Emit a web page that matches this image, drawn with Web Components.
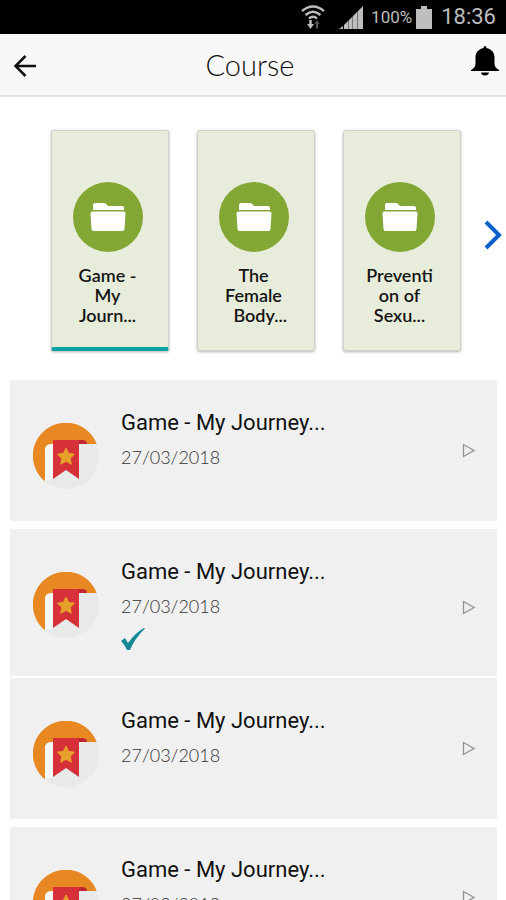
<!DOCTYPE html>
<html lang="en">
<head>
<meta charset="utf-8">
<meta name="viewport" content="width=device-width, initial-scale=1">
<title>Course</title>
<style>
  html, body { height: 100%; margin: 0; }
  body { background: #fff; color: #111; font-family: Lato, "Open Sans", sans-serif; overflow: hidden; }
</style>
</head>
<body>
<course-app></course-app>
<script>
const define = (name, html, setup) => {
  const template = document.createElement('template');
  template.innerHTML = html;
  customElements.define(name, class extends HTMLElement {
    connectedCallback() {
      if (this.shadowRoot) return;
      const root = this.attachShadow({ mode: 'open' });
      root.append(template.content.cloneNode(true));
      if (setup) setup(this, root);
    }
  });
};

define('status-bar', `
<style>
  :host { display: flex; align-items: center; justify-content: flex-end; height: 34px; padding-right: 10px; box-sizing: border-box; background: #000; color: #bdbdbd; font-family: Roboto, sans-serif; }
  svg { display: block; flex: none; }
  .wifi { margin-right: 13px; }
  .signal { margin-right: 8px; }
  .level { font-size: 17px; line-height: 34px; margin-right: 4px; }
  .battery { margin-right: 9px; }
  .time { font-size: 22px; line-height: 34px; }
</style>
<svg class="wifi" width="26" height="28" viewBox="0 0 26 28" fill="none" stroke="#bdbdbd" stroke-width="2.4">
  <path d="M2 8Q13-1 24 8M5.500 12Q13 5.500 20.500 12M9 15.500Q13 12 17 15.500"/>
  <path d="M10.500 17v6" stroke-width="2.500"/><path d="M7 21h7L10.500 26z" fill="#bdbdbd" stroke="none"/>
  <path d="M17 19.500v6" stroke="#555" stroke-width="2"/><path d="M14.500 21h5L17 17z" fill="#555" stroke="none"/>
</svg>
<svg class="signal" width="24" height="24" viewBox="0 0 24 24" fill="#bdbdbd">
  <path d="M0 24l4-3v3zM5 20l4-4v8H5zM10 15l3-3v12h-3zM14 11l4-4v17h-4zM19 6l5-5v23h-5z"/><path d="M9 16l1-1v9H9zM13 12l1-1v13h-1zM18 7l1-1v18h-1z" fill="#777"/>
</svg>
<span class="level">100%</span>
<svg class="battery" width="16" height="24" viewBox="0 0 16 24" fill="#bdbdbd"><path d="M5 1h6v3h5v20H0V4h5z"/></svg>
<span class="time">18:36</span>
`);

define('app-header', `
<style>
  :host { display: grid; grid-template-columns: 50px 1fr 56px; align-items: center; height: 63px; box-sizing: border-box; background: #f8f8f8; border-bottom: 2px solid #e0e0e0; }
  button { display: flex; height: 50px; padding: 0; border: 0; background: none; align-items: center; }
  .back { padding: 2px 0 0 13px; }
  .bell { justify-content: flex-end; padding: 0 7px 8px 0; }
  h1 { margin: 0; text-align: center; font-weight: 300; font-size: 29px; line-height: 40px; color: #111; }
</style>
<button class="back" aria-label="Back"><svg width="24" height="24" viewBox="0 0 24 24" fill="none" stroke="#111" stroke-width="2.500"><path d="M12.500 2L2.500 12l10 10M2.500 12H23"/></svg></button>
<h1><slot></slot></h1>
<button class="bell" aria-label="Notifications"><svg width="28" height="30" viewBox="0 0 28 30"><path d="M12.500 2Q12.500 0 14 0t1.500 2c5 1 8 4.500 8 9.500v6c0 3 1.500 5 4.500 6.500v1H0v-1c3-1.500 4.500-3.500 4.500-6.500v-6c0-5 3-8.500 8-9.500zM10 26.500h8Q17.500 29.500 14 29.500T10 26.500z" fill="#000"/></svg></button>
`);

define('topic-card', `
<style>
  :host { display: block; flex: 0 1 118px; min-width: 0; }
  button { display: flex; flex-direction: column; align-items: center; width: 100%; height: 221px; padding: 51px 5px 0 0; box-sizing: border-box; border: 1px solid #cfd3c5; border-radius: 3px; background: #e7edda; box-shadow: 0 1px 3px rgba(0,0,0,.3); color: #151515; font: 600 18px/20px Lato, "Open Sans", sans-serif; }
  :host([selected]) button { border-bottom: 4px solid #0aa3a3; border-radius: 2px; }
  .label { margin-top: 13px; text-align: center; white-space: nowrap; }
  svg { display: block; }
</style>
<button>
  <svg width="70" height="70" viewBox="0 0 70 70"><circle cx="35" cy="35" r="35" fill="#83a735"/><path d="M20 27v-4q0-2 2-2h9q2 0 3 2l1 1h14q2 0 2 2v2H20zM19.500 29.500h31q2 0 2 2L51.500 47q0 2-2 2h-29q-2 0-2-2L17.500 31.500q0-2 2-2z" fill="#fff"/></svg>
  <span class="label"><slot></slot></span>
</button>
`, (host, root) => root.querySelector('button').setAttribute('aria-pressed', host.hasAttribute('selected')));

define('topic-carousel', `
<style>
  :host { display: grid; grid-template-columns: 51px 1fr 44px; align-items: center; padding: 33px 0 29px; }
  .cards { grid-column: 2; display: flex; gap: 28px; }
  button { display: flex; justify-content: flex-end; height: 60px; align-items: center; padding: 0 4px 12px 0; border: 0; background: none; }
</style>
<div class="cards"><slot></slot></div>
<button aria-label="Next topics"><svg width="18" height="30" viewBox="0 0 18 30" fill="none" stroke="#0b5fcb" stroke-width="4"><path d="M2 2l13 13L2 28"/></svg></button>
`);

define('lesson-row', `
<style>
  :host { display: block; min-height: 141px; padding: 27px 19px 18px 23px; box-sizing: border-box; background: #f0f0f0; }
  .content { display: grid; grid-template-columns: 66px 1fr 16px; column-gap: 22px; min-height: 87px; }
  .badge { margin-top: 16px; }
  svg { display: block; }
  h2 { margin: 0; font: 400 22px/32px Roboto, sans-serif; color: #111; white-space: nowrap; }
  time { display: block; font-weight: 300; font-size: 18px; line-height: 36px; color: #333; }
  .check { display: none; }
  :host([done]) .check { display: block; height: 34px; padding-top: 4px; box-sizing: border-box; }
  button { align-self: center; padding: 0; border: 0; background: none; }
</style>
<div class="content">
  <svg class="badge" width="66" height="66" viewBox="0 0 66 66">
    <circle cx="33" cy="33" r="33" fill="#e8e9e9"/>
    <path d="M12 58.300A33 33 0 1 1 63.700 21H19q-7 0-7 6z" fill="#e78822"/>
    <path d="M12 58V27q0-6 7-6h1v35z" fill="#f7f7f7"/>
    <path d="M21 21q0-4 4-4h24q5 0 5 4z" fill="#bf2631"/>
    <path d="M20 17h26v39L33 47 20 56z" fill="#d63139"/>
    <path d="M33 25l2.600 5.400 5.900.8-4.300 4.100 1.100 5.900-5.300-2.900-5.300 2.900 1.100-5.900-4.300-4.100 5.900-.8z" fill="#e7a029" stroke="#e7a029" stroke-linejoin="round"/>
  </svg>
  <div>
    <h2><slot></slot></h2>
    <time></time>
    <div class="check" role="img" aria-label="Completed"><svg width="24" height="22" viewBox="0 0 24 22"><path d="M0 13l4-3 3 5Q14 5 23 0l1 .5Q14 10 9 22H6Q4 17 0 13z" fill="#168995"/></svg></div>
  </div>
  <button aria-label="Open lesson"><svg width="14" height="15" viewBox="0 0 14 15" fill="none" stroke="#929292" stroke-width="1.300"><path d="M1.500 1.500v12l10.500-6z"/></svg></button>
</div>
`, (host, root) => { root.querySelector('time').textContent = host.getAttribute('date'); });

define('course-app', `
<style>
  :host { display: block; }
  .lessons { display: flex; flex-direction: column; margin: 0 9px 0 10px; }
  lesson-row { margin-bottom: 8px; }
  lesson-row[done] { margin-bottom: 2px; }
</style>
<status-bar></status-bar>
<app-header>Course</app-header>
<main>
  <topic-carousel>
    <topic-card selected>Game -<br>My<br>Journ...</topic-card>
    <topic-card>The<br>Female<br>&nbsp;&nbsp;&nbsp;Body...</topic-card>
    <topic-card>Preventi<br>on of<br>Sexu...</topic-card>
  </topic-carousel>
  <div class="lessons">
    <lesson-row date="27/03/2018">Game - My Journey...</lesson-row>
    <lesson-row date="27/03/2018" done>Game - My Journey...</lesson-row>
    <lesson-row date="27/03/2018">Game - My Journey...</lesson-row>
    <lesson-row date="27/03/2018">Game - My Journey...</lesson-row>
  </div>
</main>
`);
</script>
</body>
</html>
